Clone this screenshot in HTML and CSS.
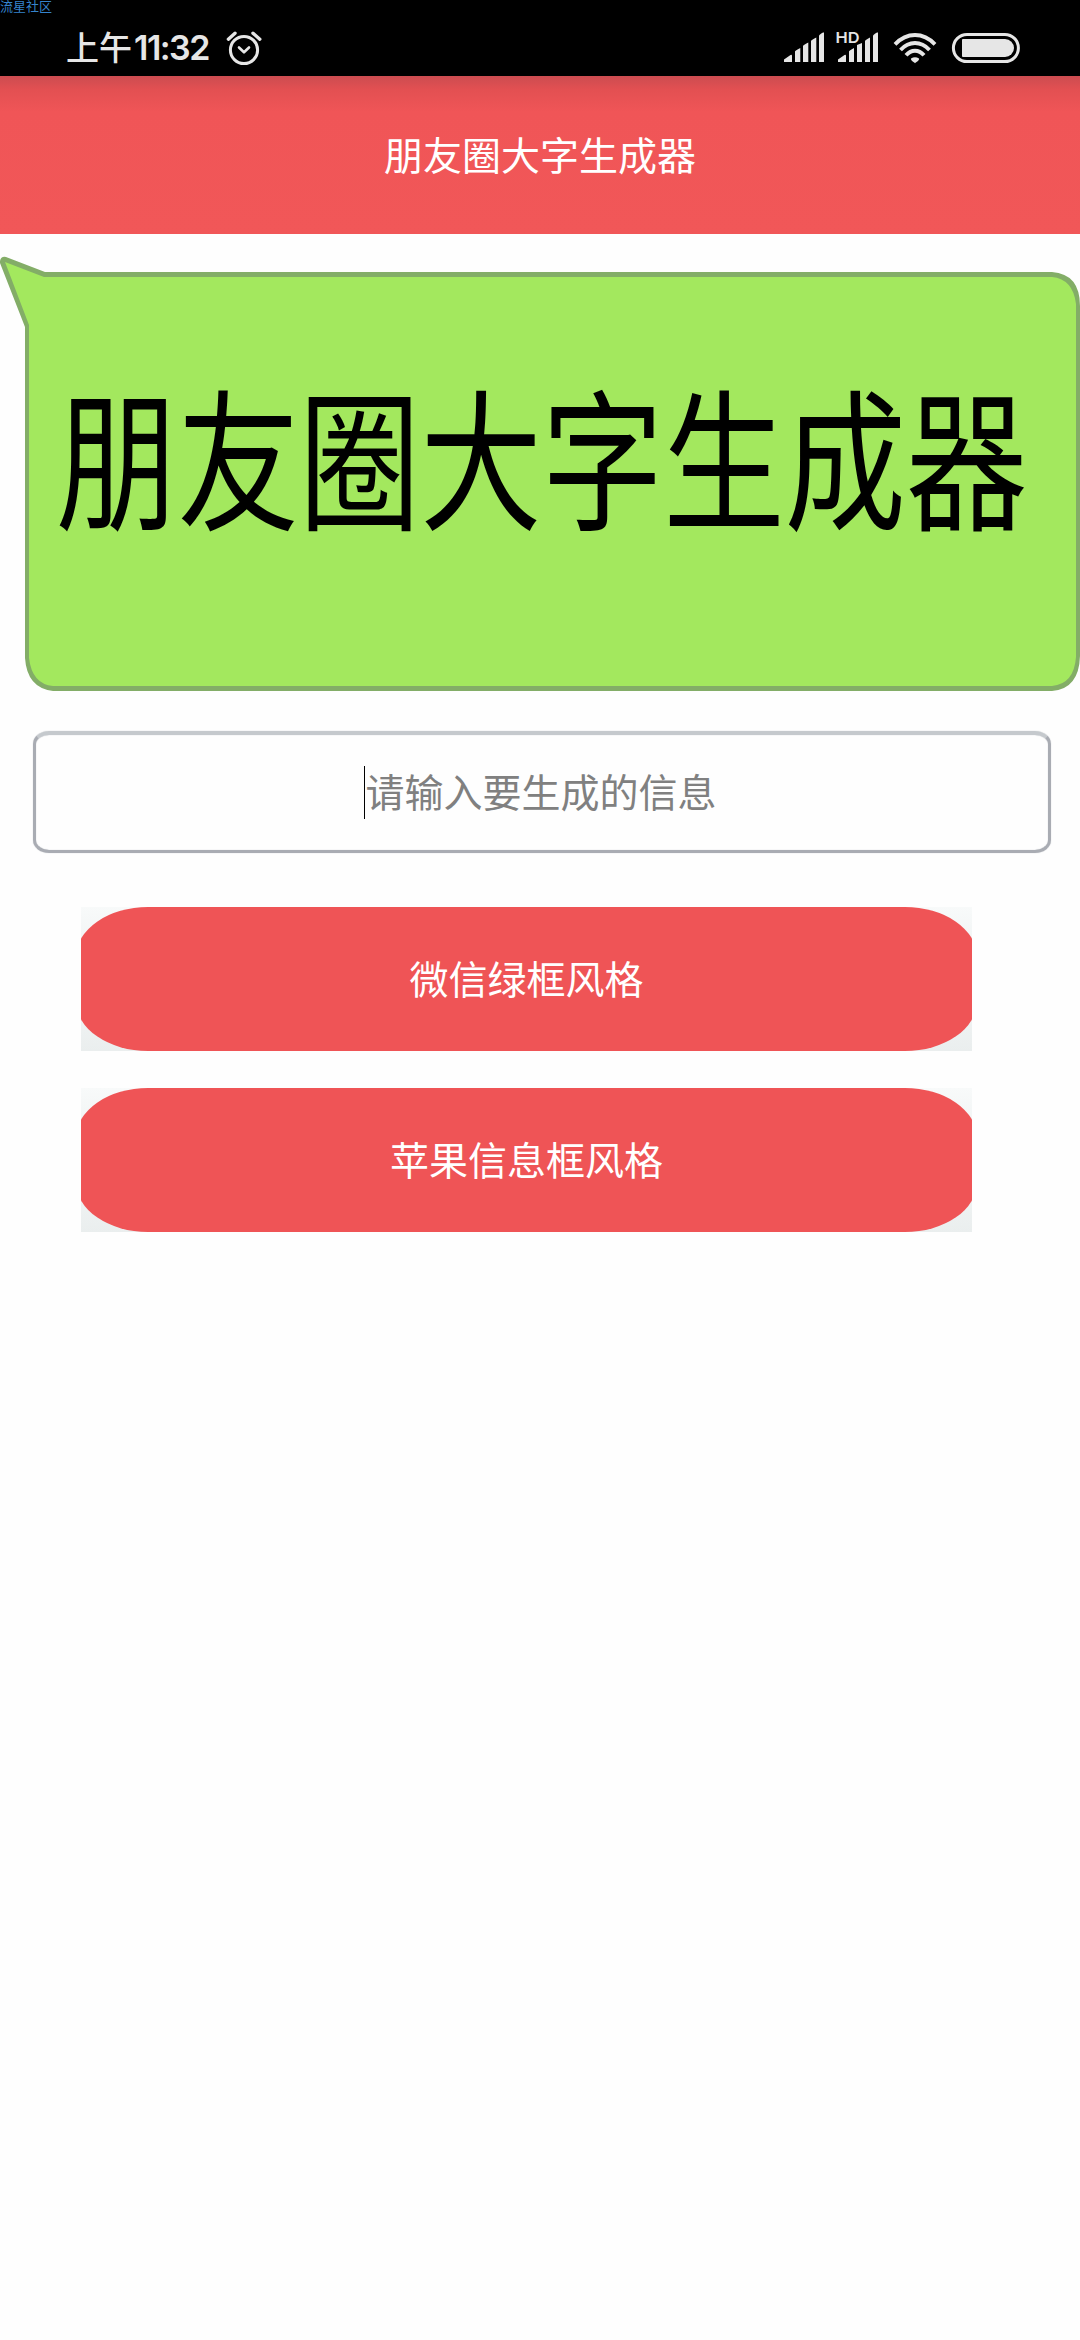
FILE: index.html
```html
<!DOCTYPE html>
<html lang="zh-CN">
<head>
<meta charset="utf-8">
<title>朋友圈大字生成器</title>
<link rel="stylesheet" href="styles.css">
</head>
<body>
<div class="watermark">流星社区</div>
<div class="status">
  <div class="clock"><span class="period">上午</span><span class="time">11:32</span></div>
  <svg class="alarm" width="36" height="44" viewBox="226 22 36 44" fill="none" stroke="#e6e6e6" stroke-width="3" stroke-linecap="round" stroke-linejoin="round">
    <circle cx="244" cy="50" r="13.6"/>
    <path d="M239 47.5l5 4.8 5-4.8" stroke-width="2.6"/>
    <path d="M228.4 39.2l6.600-6M253 33.2l6.800 6" stroke-width="3.4"/>
  </svg>
  <svg class="indicators" width="240" height="44" viewBox="782 22 240 44" fill="#e6e6e6">
    <path d="M784 62v-2.500l6.500-4.500q1.500-1 1.500 1v6zM795 62V51.500q0-1 5.300-3.500V62zM803 62V46q0-1 5.300-3.500V62zM811 62V41q0-1 5.300-3.500V62zM819 62V36q0-1.500 4-3.500h1V62z"/>
    <path d="M838 62v-2.500l6.500-4.500q1.500-1 1.500 1v6zM849 62V51.500q0-1 5-3.500V62zM857 62V45l5-2V62zM865 62V41q0-1 5-3.500V62zM873 62V36q0-1.500 4-3.500h1V62z"/>
    <text class="hd" x="835.500" y="43" textLength="24" lengthAdjust="spacingAndGlyphs">HD</text>
    <g fill="none" stroke="#e6e6e6" stroke-width="3.900">
      <path d="M895 44.300Q904 35 915 35T935 44.300"/>
      <path d="M900.500 50Q907 43 915 43T929.500 50"/>
      <path d="M906 55.300Q910 50.700 915 50.700T924 55.300"/>
    </g>
    <path d="M911 58.600q4-2.800 8 0c.5 1.500-2 3.300-4 4.600-2-1.300-4.500-3.100-4-4.600z"/>
    <rect x="953.400" y="34.400" width="65" height="27.200" rx="13.600" fill="none" stroke="#e6e6e6" stroke-width="3"/>
    <path d="M963 39h42a9 9 0 0 1 0 18h-42q-1 0-1-1V40q0-1 1-1z"/>
  </svg>
</div>
<header class="title">朋友圈大字生成器</header>
<main class="content">
  <svg class="bubble" width="1080" height="457" viewBox="0 234 1080 457">
    <path fill="#83ad67" d="M0 261Q1 256 6 257L45 272H1052Q1080 274 1080 306V656Q1079 689 1052 691H53Q27 688 25 658V327L0 263z"/>
    <path fill="#a3e85e" d="M5 262L44 277H1052Q1073 279 1076 304V657Q1074 684 1052 686H53Q32 684 29 658V325z"/>
    <text class="big" transform="translate(56 519) scale(.799 1)">朋友圈大字生成器</text>
  </svg>
  <div class="field"><span class="caret"></span><span class="hint">请输入要生成的信息</span></div>
  <div class="actions">
    <div class="button"><span>微信绿框风格</span></div>
    <div class="button"><span>苹果信息框风格</span></div>
  </div>
</main>
</body>
</html>
```
FILE: styles.css
```css
* { box-sizing: border-box; }
body {
  margin: 0;
  width: 1080px;
  height: 2340px;
  background: #fefefe;
  font-family: "Noto Sans CJK SC", sans-serif;
  font-size: 39px;
  line-height: 1;
}
.watermark {
  position: absolute;
  left: 0;
  top: 0;
  font-size: 13px;
  line-height: 11px;
  color: #3583cc;
}
.status {
  display: flex;
  align-items: flex-start;
  height: 76px;
  padding: 22px 58px 0 66px;
  background: #000;
  color: #e6e6e6;
}
.clock {
  display: flex;
  width: 160px;
  height: 52px;
  align-items: center;
  white-space: nowrap;
}
.period { width: 68px; padding-bottom: 3px; font-size: 33px; font-weight: 500; }
.time { font-family: Inter, sans-serif; font-size: 34px; font-weight: 600; letter-spacing: -1.5px; }
.indicators { margin-left: auto; }
.hd { font: 600 15px Inter, sans-serif; }
.title {
  display: flex;
  align-items: center;
  justify-content: center;
  height: 158px;
  padding-bottom: 3px;
  color: #fff;
  background: linear-gradient(#cc4c50, #e35052 14px, #f05557 36px, #f15758);
}
.bubble { display: block; }
.big { font-size: 152px; fill: #000; }
.field {
  display: flex;
  align-items: center;
  justify-content: center;
  width: 1018px;
  height: 122px;
  margin: 40px 0 0 33px;
  padding: 0 3px 1px 0;
  border: 3px solid #a9acb3;
  border-top: 4px solid #c5c9cd;
  border-radius: 16px / 13px;
  box-shadow: 0 0 1px #b8bbc1, inset 0 0 1px #b8bbc1;
  color: #808080;
}
.caret { width: 1px; height: 53px; background: #000; }
.hint { padding-bottom: 3px; }
.actions {
  display: flex;
  flex-direction: column;
  gap: 37px;
  width: 891px;
  margin: 54px 0 0 81px;
}
.button {
  position: relative;
  display: flex;
  align-items: center;
  justify-content: center;
  height: 144px;
  padding-bottom: 3px;
  overflow: hidden;
  color: #fff;
  background: linear-gradient(#f8fafa, #f1f4f4 40px, #f1f4f4 100px, #eaeeee);
}
.button::before {
  content: "";
  position: absolute;
  inset: 0 -5px;
  border-radius: 72px / 50px;
  background: #ef5456;
}
.button span { position: relative; }
```
